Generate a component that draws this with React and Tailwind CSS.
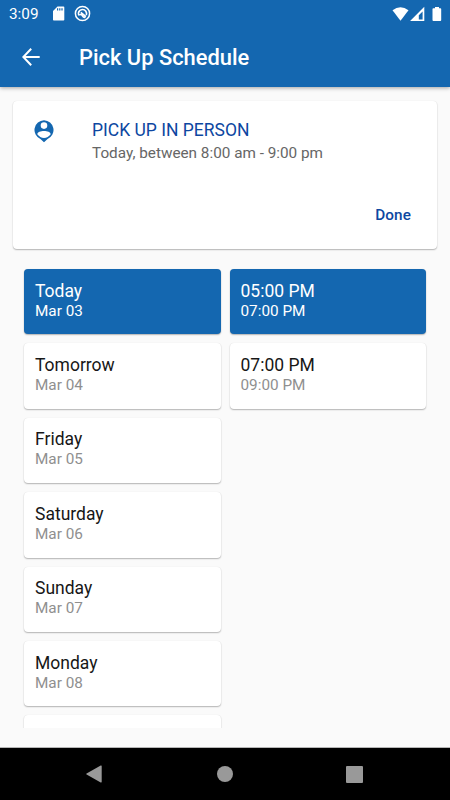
import React from "react";

const days = [
  ["Today", "Mar 03"],
  ["Tomorrow", "Mar 04"],
  ["Friday", "Mar 05"],
  ["Saturday", "Mar 06"],
  ["Sunday", "Mar 07"],
  ["Monday", "Mar 08"],
];

const times = [
  ["05:00 PM", "07:00 PM"],
  ["07:00 PM", "09:00 PM"],
];

function Option({ title, detail, selected }) {
  return (
    <div
      className={`h-[65.4px] shrink-0 rounded-[4px] pl-[11px] pt-[11.6px] whitespace-nowrap shadow-[0_1px_1.5px_rgba(0,0,0,0.28),0_0_1px_rgba(0,0,0,0.1)] ${
        selected ? "bg-[#1467b0] text-white" : "bg-white text-[#171717]"
      }`}
    >
      <div className="text-[17.5px] leading-[21px]">{title}</div>
      <div
        className={`text-[15.3px] leading-[18px] ${
          selected ? "text-white" : "text-[#8f8f8f]"
        }`}
      >
        {detail}
      </div>
    </div>
  );
}

function StatusBar() {
  return (
    <div className="flex h-[27px] items-center text-white">
      <span className="ml-[9px] w-[30px] pt-[1px] text-[15.3px] leading-[27px]">3:09</span>
      <svg className="ml-[14px] h-[15px] w-[12px]" viewBox="0 0 12 15">
        <path fill="white" fillRule="evenodd" d="M4.5.5H10.5Q11.3.5 11.3 1.3V13.7Q11.3 14.5 10.5 14.5H.8Q0 14.5 0 13.7V5ZM4 2.3V4.6H5.2V2.3ZM6.2 2.3V4.6H7.4V2.3ZM8.4 2.3V4.6H9.6V2.3Z" />
      </svg>
      <svg className="ml-[9px] h-[17px] w-[17px]" viewBox="0 0 17 17" fill="none" stroke="white">
        <circle cx="8.5" cy="8.5" r="7.1" strokeWidth="1.5" />
        <path d="M4.8 10.4A4.1 4.1 0 1 1 12.3 10.1" strokeWidth="1.7" />
        <path d="M6.8 7.3L12 11.6M5.2 10.2Q7 8.6 8.4 10.8T11.4 12.2" strokeWidth="1.6" />
      </svg>
      <svg className="ml-auto h-[16px] w-[17px]" viewBox="0 0 17 16">
        <path fill="white" d="M.5 4.3Q8.5-1.9 16.5 4.3L8.5 14.8Z" />
      </svg>
      <svg className="ml-[1px] h-[16px] w-[15px]" viewBox="0 0 15 16">
        <path fill="white" fillRule="evenodd" d="M14.3.8V15H.1ZM12.6 5.5L8.8 9.3V13.4H12.6Z" />
      </svg>
      <svg className="ml-[7px] mr-[8px] h-[16px] w-[10px]" viewBox="0 0 10 16">
        <path fill="white" d="M3 1H7V2.3H8.4Q9.2 2.3 9.2 3.1V14Q9.2 14.9 8.4 14.9H1.4Q.5 14.9.5 14V3.1Q.5 2.3 1.4 2.3H3Z" />
      </svg>
    </div>
  );
}

export default function App() {
  return (
    <div className="flex h-[800px] w-[450px] flex-col overflow-hidden bg-[#fafafa] font-[Roboto,sans-serif]">
      <header className="z-10 h-[87px] shrink-0 bg-[#1467b0] text-white shadow-[0_1px_4px_rgba(0,0,0,0.35)]">
        <StatusBar />
        <div className="flex h-[60px] items-center">
          <svg className="ml-[22px] h-[18px] w-[18px]" viewBox="0 0 18 18" fill="none" stroke="white" strokeWidth="2">
            <path d="M17.7 9H1.5M9.2.8L1.3 9L9.2 17.2" />
          </svg>
          <h1 className="ml-[39px] whitespace-nowrap pt-[2px] text-[21.9px] font-medium leading-[60px]">
            Pick Up Schedule
          </h1>
        </div>
      </header>

      <main className="flex h-[661px] shrink-0 flex-col border-b border-[#b5b5b5]">
        <section className="mx-[13px] mt-[14px] flex h-[148px] shrink-0 flex-col rounded-[4px] bg-white shadow-[0_1px_1.5px_rgba(0,0,0,0.28),0_0_1px_rgba(0,0,0,0.1)]">
          <div className="flex">
            <svg className="ml-[21px] mt-[19px] h-[23px] w-[20px]" viewBox="0 0 20 23">
              <path fill="#1467b0" fillRule="evenodd" d="M10 .2A9.8 9.8 0 0 0 6.4 19L10 22.3L13.6 19A9.8 9.8 0 0 0 10 .2ZM10 2.3A3.3 3.3 0 1 1 10 8.9A3.3 3.3 0 1 1 10 2.3ZM10 18Q6 18 3.3 14.3C3.5 9.9 16.5 9.9 16.7 14.3Q14 18 10 18Z" />
            </svg>
            <div className="ml-[38px] mt-[19px] whitespace-nowrap">
              <div className="text-[17.5px] leading-[21px] text-[#0d47a1]">PICK UP IN PERSON</div>
              <div className="mt-[3px] text-[15.3px] leading-[18px] text-[#666]">
                Today, between 8:00 am - 9:00 pm
              </div>
            </div>
          </div>
          <button className="mb-[25px] mr-[26px] mt-auto self-end text-[15.3px] font-medium leading-[18px] tracking-[0.1px] text-[#0d47a1]">
            Done
          </button>
        </section>

        <div className="mx-[22px] mt-[18px] grid h-[461px] grid-cols-2 gap-x-[4px] overflow-hidden px-[2px] pt-[2px]">
          <div className="flex flex-col gap-[9px] pr-[2.5px]">
            {days.map(([title, detail], i) => (
              <Option key={title} title={title} detail={detail} selected={i === 0} />
            ))}
            <div className="h-[65.4px] shrink-0 rounded-[4px] bg-white shadow-[0_1px_1.5px_rgba(0,0,0,0.28),0_0_1px_rgba(0,0,0,0.1)]" />
          </div>
          <div className="flex flex-col gap-[9px] pl-[2.5px]">
            {times.map(([title, detail], i) => (
              <Option key={title} title={title} detail={detail} selected={i === 0} />
            ))}
          </div>
        </div>
      </main>

      <nav className="flex h-[52px] shrink-0 items-center bg-black">
        <svg className="ml-[86px] h-[18px] w-[16px]" viewBox="0 0 16 18">
          <path fill="#999" d="M15.7 1.2V16.8Q15.7 18 14.7 17.4L.6 9.6Q-.2 9 .6 8.4L14.7.6Q15.7 0 15.7 1.2Z" />
        </svg>
        <div className="ml-[115px] h-[16px] w-[16px] rounded-full bg-[#999]" />
        <div className="ml-[113px] h-[17px] w-[17px] rounded-[1px] bg-[#999]" />
      </nav>
    </div>
  );
}
